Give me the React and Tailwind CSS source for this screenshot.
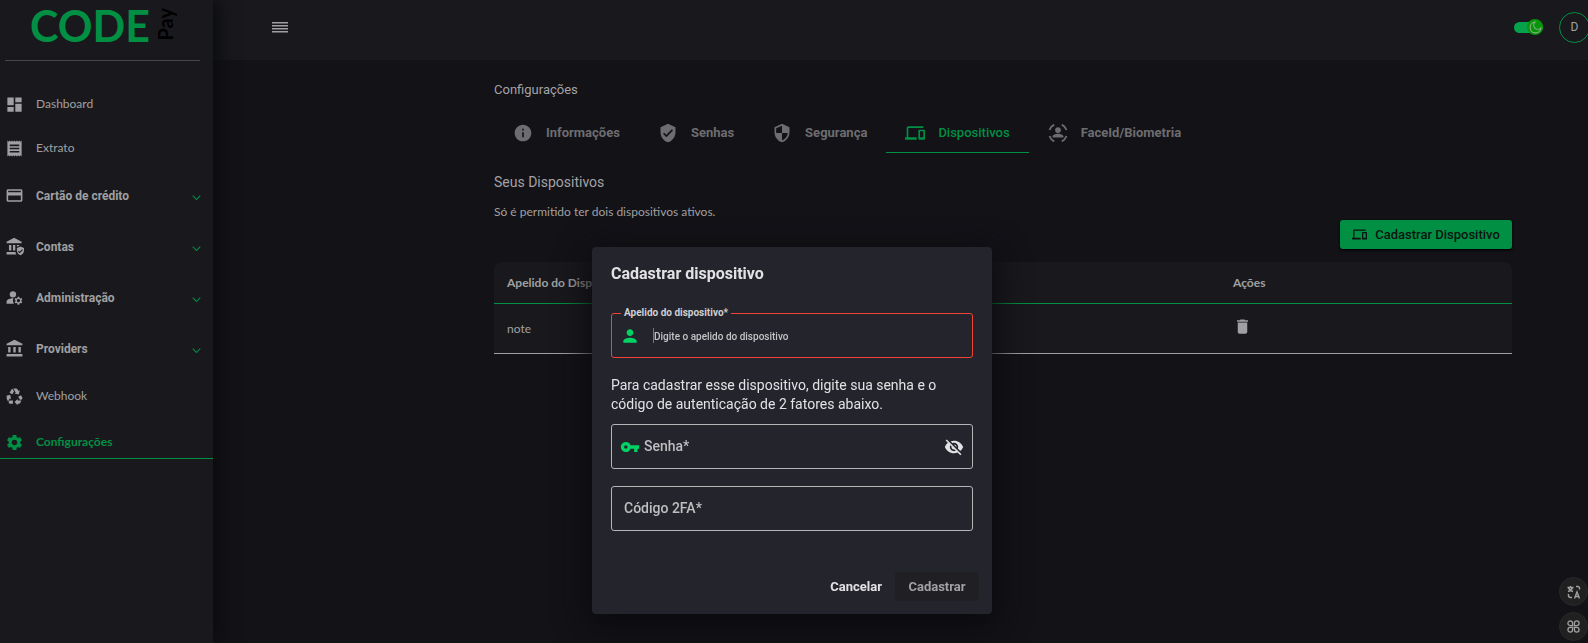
import React from "react";
import {
  MdDashboard, MdReceipt, MdCreditCard, MdManageAccounts, MdAccountBalance,
  MdRecycling, MdSettings, MdInfo, MdVerifiedUser, MdSecurity, MdDevices,
  MdDelete, MdPerson, MdVpnKey, MdVisibilityOff,
} from "react-icons/md";

function BankShield({ className }) {
  return (
    <svg viewBox="0 0 24 24" fill="currentColor" className={className}>
      <path d="M11.5 1 2 6v2h19V6zM5 10v7h3v-7zM10 10v7h3v-7zM15 10v2.2l3-1.2v-1zM2 19v3h12.4a7 7 0 0 1-1.2-3z" />
      <path fillRule="evenodd" d="M19.5 12 15 14v3c0 2.800 1.900 5.400 4.500 6 2.600-.6 4.500-3.200 4.500-6v-3zm-1 8.500-2.200-2.200.9-.9 1.300 1.300 3.300-3.300.9.900z" />
    </svg>
  );
}

function FaceScan({ className }) {
  return (
    <svg viewBox="0 0 24 24" className={className}>
      <g fill="none" stroke="currentColor" strokeWidth="2.200">
        <path d="M1.800 8.500A11 11 0 0 1 7.500 2M16.500 2a11 11 0 0 1 5.700 6.500M22.200 15.500A11 11 0 0 1 16.500 22M7.500 22a11 11 0 0 1-5.700-6.500" />
      </g>
      <circle cx="12" cy="8.500" r="3.500" fill="currentColor" />
      <path d="M5.500 17.500v-1.300c0-2.200 3.500-3.400 6.500-3.400s6.500 1.200 6.500 3.400v1.300z" fill="currentColor" />
    </svg>
  );
}

function Chevron() {
  return (
    <svg viewBox="0 0 10 6" className="mt-1 ml-auto w-[9px] text-[#018a42]" fill="none" stroke="currentColor" strokeWidth="1.200">
      <path d="m.8.8 4.200 4.200L9.200.8" />
    </svg>
  );
}

const menu = [
  { label: "Dashboard", Icon: MdDashboard },
  { label: "Extrato", Icon: MdReceipt },
  { label: "Cartão de crédito", Icon: MdCreditCard, group: true },
  { label: "Contas", Icon: BankShield, group: true },
  { label: "Administração", Icon: MdManageAccounts, group: true },
  { label: "Providers", Icon: MdAccountBalance, group: true },
  { label: "Webhook", Icon: MdRecycling },
];

const tabs = [
  { label: "Informações", Icon: MdInfo },
  { label: "Senhas", Icon: MdVerifiedUser },
  { label: "Segurança", Icon: MdSecurity },
  { label: "Dispositivos", Icon: MdDevices, active: true },
  { label: "FaceId/Biometria", Icon: FaceScan },
];

function Sidebar() {
  return (
    <aside className="z-10 w-[213px] shrink-0 bg-[#19191d] shadow-[6px_0_16px_#0b0c0f]">
      <div className="ml-[5px] mr-[13px] flex h-[61px] items-start border-b border-[#47474a] pl-[25px] font-[Lato,sans-serif] font-bold">
        <span className="text-[43px] leading-[52px] text-[#018f44]">CODE</span>
        <span className="ml-[3px] mt-[8px] rotate-180 text-[20px] leading-6 text-black [writing-mode:vertical-rl]">Pay</span>
      </div>
      <nav className="flex flex-col pt-[21px]">
        {menu.map(({ label, Icon, group }) =>
          group ? (
            <button key={label} type="button" className="flex h-[51px] items-center pl-[5px] pr-3 text-[12px] font-bold text-[#a0a0a2]">
              <Icon className="size-[19px]" />
              <span className="ml-3">{label}</span>
              <Chevron />
            </button>
          ) : (
            <a key={label} href="#" className="flex h-[44px] items-center pl-[5px] font-[Lato,sans-serif] text-[12px] text-[#a0a0a2]">
              <Icon className="size-[19px]" />
              <span className="ml-3">{label}</span>
            </a>
          )
        )}
        <a href="#" aria-current="page" className="flex h-[41px] items-center border-b border-[#018f44] pl-[5px] pt-2 font-[Lato,sans-serif] text-[12px] font-bold text-[#018f44]">
          <MdSettings className="size-[19px]" />
          <span className="ml-3">Configurações</span>
        </a>
      </nav>
    </aside>
  );
}

function Header() {
  return (
    <header className="flex h-[60px] items-center bg-[#19191d] pb-[6px] pl-[59px]">
      <button type="button" aria-label="Menu" className="text-[#a0a0a2]">
        <svg viewBox="0 0 16 12" className="w-4" fill="currentColor">
          <path d="M0 1h16v1.500H0zM0 4h16v1.500H0zM0 7h16v1.500H0zM0 10h16v1.500H0z" />
        </svg>
      </button>
      <button type="button" role="switch" aria-checked="true" aria-label="Tema escuro" className="ml-auto flex h-[11px] w-[29px] items-center justify-end rounded-full bg-[#06a24b]">
        <span className="flex size-4 shrink-0 items-center justify-center rounded-full bg-[#099509]">
          <svg viewBox="0 0 24 24" className="size-[13px]" fill="none" stroke="#8fae8f" strokeWidth="2">
            <path d="M11 2a10 10 0 1 0 11 11 6.500 6.500 0 0 1-11-11z" />
          </svg>
        </span>
      </button>
      <button type="button" className="-mr-[2px] ml-4 flex size-[31px] items-center justify-center rounded-full border border-[#018f44] text-[12px] text-[#a0a0a2]">D</button>
    </header>
  );
}

function Devices() {
  return (
    <main className="pl-[281px] pr-[76px] pt-[20px]">
      <h1 className="text-[13px] leading-5 text-[#a3a3a5]">Configurações</h1>
      <div role="tablist" className="mt-[14px] flex h-[39px]">
        {tabs.map(({ label, Icon, active }) => (
          <button
            key={label}
            type="button"
            role="tab"
            aria-selected={!!active}
            className={
              active
                ? "flex items-center gap-[13px] border-b border-[#018f44] px-[19px] text-[13px] font-medium text-[#018f44]"
                : "flex items-center gap-[13px] border-b border-transparent px-[19px] text-[13px] font-bold text-[#6d6d70]"
            }
          >
            <Icon className="size-5" />
            {label}
          </button>
        ))}
      </div>
      <h2 className="mt-[19px] text-[14px] leading-5 text-[#a3a3a5]">Seus Dispositivos</h2>
      <p className="mt-[10px] font-[Lato,sans-serif] text-[12px] leading-5 text-[#a0a0a2]">Só é permitido ter dois dispositivos ativos.</p>
      <div className="-mt-[2px] flex justify-end">
        <button type="button" className="flex h-[29px] w-[172px] items-center justify-center gap-2 rounded-[3px] bg-[#018f44] text-[13px] font-medium text-[#0b1410] shadow-sm shadow-black">
          <MdDevices className="size-[15px]" />
          Cadastrar Dispositivo
        </button>
      </div>
      <table className="mt-[13px] w-full border-separate border-spacing-0 overflow-hidden rounded-t-lg bg-[#19191d] text-left font-[Lato,sans-serif] text-[12px] text-[#a0a0a2]">
        <thead>
          <tr className="h-[42px]">
            <th className="w-[726px] border-b border-[#018f44] px-[13px]">Apelido do Dispositivo</th>
            <th className="border-b border-[#018f44] px-[13px]">Ações</th>
          </tr>
        </thead>
        <tbody>
          <tr className="h-[50px]">
            <td className="border-b border-[#a0a0a2] px-[13px]">note</td>
            <td className="border-b border-[#a0a0a2] px-[13px]">
              <button type="button" aria-label="Excluir" className="block pb-1"><MdDelete className="size-[19px]" /></button>
            </td>
          </tr>
        </tbody>
      </table>
    </main>
  );
}

function DeviceDialog() {
  return (
    <div className="fixed inset-0 z-20 flex items-start justify-center pr-1 pt-[247px]">
      <form role="dialog" aria-labelledby="dialog-title" className="w-[400px] rounded bg-[#24242c] pb-[13px] pt-[13px] text-[#e2e2e4] shadow-[0_10px_30px_6px_#0c0c0f]">
        <div className="px-[19px]">
          <h2 id="dialog-title" className="text-[16px] font-bold leading-7">Cadastrar dispositivo</h2>
          <div className="relative mt-[25px] flex h-[45px] items-center rounded-[3px] border border-[#f44336] px-2">
            <label htmlFor="nickname" className="absolute -top-[9px] left-[9px] bg-[#24242c] px-[3px] text-[10px] font-bold leading-4 text-[#cfcfd1]">Apelido do dispositivo*</label>
            <MdPerson className="size-5 text-[#00d264]" />
            <span className="ml-[13px] h-[15px] w-px bg-[#f44336]" />
            <input id="nickname" type="text" placeholder="Digite o apelido do dispositivo" className="min-w-0 grow bg-transparent pt-[2px] text-[10px] font-medium outline-none placeholder:text-[#c4c4c7]" />
          </div>
          <p className="mt-[18px] text-[14px] leading-[19px]">Para cadastrar esse dispositivo, digite sua senha e o código de autenticação de 2 fatores abaixo.</p>
          <div className="mt-[10px] flex h-[45px] items-center rounded-[3px] border border-[#b5b5b8] px-2">
            <MdVpnKey className="size-5 text-[#00d264]" />
            <label htmlFor="password" className="ml-1 text-[14px] font-medium text-[#bfbfc2]">Senha*</label>
            <input id="password" type="password" className="min-w-0 grow bg-transparent outline-none" />
            <button type="button" aria-label="Mostrar senha"><MdVisibilityOff className="size-5" /></button>
          </div>
          <div className="mt-[17px] flex h-[45px] items-center rounded-[3px] border border-[#b5b5b8] px-3">
            <label htmlFor="code" className="text-[14px] font-medium text-[#bfbfc2]">Código 2FA*</label>
            <input id="code" type="text" className="min-w-0 grow bg-transparent outline-none" />
          </div>
        </div>
        <div className="mt-[41px] flex justify-end gap-[1px] pr-[13px] text-[13px] font-bold">
          <button type="button" className="h-[29px] px-3">Cancelar</button>
          <button type="button" disabled className="h-[29px] w-[84px] rounded-[3px] bg-[#202024] text-[#a2a2a4]">Cadastrar</button>
        </div>
      </form>
    </div>
  );
}

function FloatingTools() {
  return (
    <div className="fixed bottom-[2px] right-0 flex flex-col gap-[6px] text-[#a0a0a2]">
      <button type="button" aria-label="Traduzir" className="flex size-[29px] items-center justify-center rounded-full border border-[#29292a] bg-[#202021]">
        <svg viewBox="0 0 14 14" className="size-[14px]" fill="none" stroke="currentColor" strokeWidth="1.400">
          <path d="M.5 2.500h6M3.500 1v1.500M5.500 2.500C5 4.500 3 6 1 6.500M1.500 2.500C2 4.500 4 6 6 6.500M9 1.500h2a1.500 1.500 0 0 1 1.500 1.500v1.500M1.500 9v1.500A2 2 0 0 0 3.500 12.500H5M7.500 13.500l2.500-6.500 2.500 6.500M8.300 11.500h3.400" />
        </svg>
      </button>
      <button type="button" aria-label="Aplicativos" className="flex size-[29px] items-center justify-center rounded-full border border-[#29292a] bg-[#202021]">
        <svg viewBox="0 0 14 14" className="size-[13px]" fill="none" stroke="currentColor" strokeWidth="1.400">
          <path d="M6 6H3.500A2.500 2.500 0 1 1 6 3.500zM8 6V3.500A2.500 2.500 0 1 1 10.500 6zM6 8v2.500A2.500 2.500 0 1 1 3.500 8zM8 8h2.500A2.500 2.500 0 1 1 8 10.500z" />
        </svg>
      </button>
    </div>
  );
}

export default function App() {
  return (
    <div className="flex min-h-screen bg-[#131217] font-[Roboto,sans-serif]">
      <Sidebar />
      <div className="min-w-0 grow">
        <Header />
        <Devices />
      </div>
      <FloatingTools />
      <DeviceDialog />
    </div>
  );
}
